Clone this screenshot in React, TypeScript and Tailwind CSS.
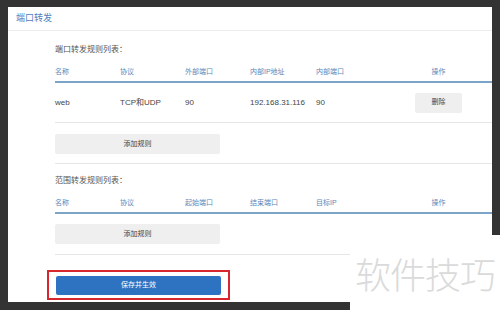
const cjk = "font-['Liberation_Sans','Noto_Sans_CJK_SC',sans-serif]";

const portCols = ["名称", "协议", "外部端口", "内部IP地址", "内部端口"];
const rangeCols = ["名称", "协议", "起始端口", "结束端口", "目标IP"];
const widths = ["w-[65px]", "w-[65px]", "w-[65px]", "w-[66px]", "w-[94px]"];

function HeaderRow({ cols }: { cols: string[] }) {
  return (
    <div className="flex items-center h-[20px] border-b-2 border-[#7ba4c6] text-[7px] text-[#5b87b8]">
      {cols.map((c, i) => (
        <div key={c} className={widths[i]}>
          {c}
        </div>
      ))}
      <div className="w-[57px] text-center">操作</div>
    </div>
  );
}

function GrayButton({ label }: { label: string }) {
  return (
    <div className="w-[165px] h-[20px] bg-[#efefef] rounded-[2px] flex items-center justify-center text-[7px] text-[#444]">
      {label}
    </div>
  );
}

export default function App() {
  const row = ["web", "TCP和UDP", "90", "192.168.31.116", "90"];

  return (
    <div className={`w-[500px] h-[310px] bg-[#333333] relative overflow-hidden pt-[7px] pl-[8px] ${cjk}`}>
      <div className="w-[484px] h-[295px] bg-white">
        {/* Title bar */}
        <div className="h-[24px] flex items-center pl-[8px] border-b border-[#ececec] text-[9px] text-[#4d7fbf]">
          端口转发
        </div>

        <div className="pl-[47px]">
          {/* Port forwarding */}
          <div className="h-[32px] pt-[13px] text-[8px] leading-[12px] text-[#555]">端口转发规则列表：</div>
          <HeaderRow cols={portCols} />
          <div className="flex items-center h-[40px] border-b border-[#e6e6e6] text-[8px] text-[#444]">
            {row.map((v, i) => (
              <div key={i} className={widths[i]}>
                {v}
              </div>
            ))}
            <div className="w-[57px] flex justify-center">
              <div className="w-[47px] h-[20px] bg-[#efefef] rounded-[2px] flex items-center justify-center text-[7px] text-[#444]">
                删除
              </div>
            </div>
          </div>
          <div className="h-[41px] pt-[11px] border-b border-[#e6e6e6]">
            <GrayButton label="添加规则" />
          </div>

          {/* Range forwarding */}
          <div className="h-[30px] pt-[11px] text-[8px] leading-[12px] text-[#555]">范围转发规则列表：</div>
          <HeaderRow cols={rangeCols} />
          <div className="h-[41px] pt-[10px] border-b border-[#e6e6e6]">
            <GrayButton label="添加规则" />
          </div>

          {/* Save */}
          <div className="pt-[15px] -ml-[8px]">
            <div className="w-[183px] h-[30px] border-2 border-[#d8262e] flex items-center justify-center">
              <div className="w-[165px] h-[19px] bg-[#2e73c2] rounded-[2px] flex items-center justify-center text-[7px] text-white">
                保存并生效
              </div>
            </div>
          </div>
        </div>
      </div>

      {/* Watermark */}
      <div className="absolute left-[350px] top-[235px] w-[150px] h-[75px] bg-white flex items-center justify-center">
        <span className="text-[36px] font-light tracking-[-1px] text-[#dadada] font-['Noto_Sans_CJK_SC',sans-serif]">
          软件技巧
        </span>
      </div>
    </div>
  );
}
